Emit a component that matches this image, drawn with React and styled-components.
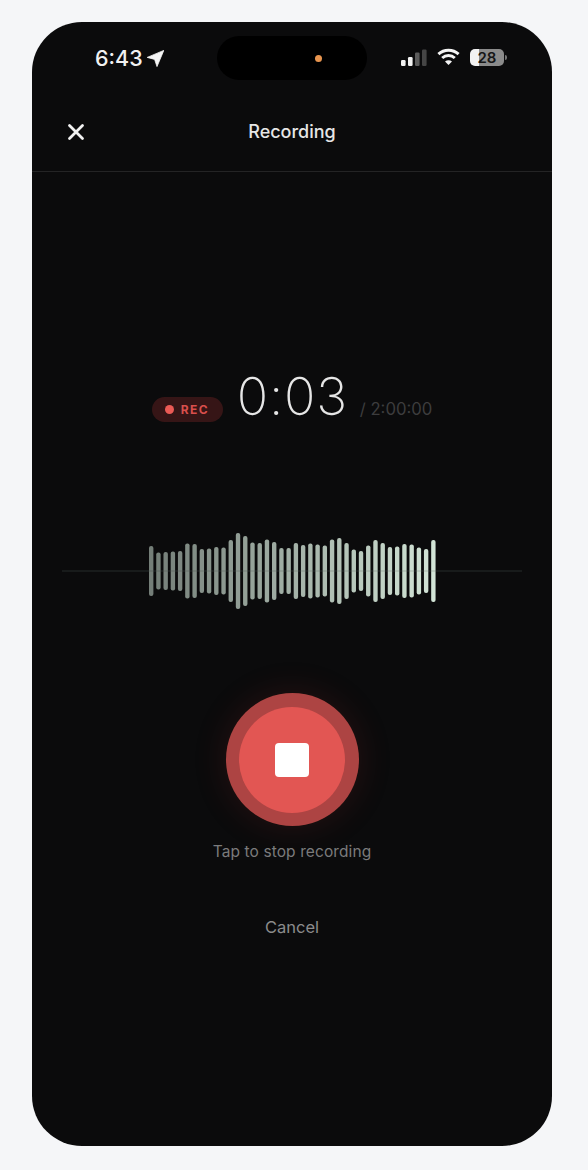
import React from 'react'
import styled, { createGlobalStyle } from 'styled-components'

const GlobalStyle = createGlobalStyle`
  html, body {
    margin: 0;
    padding: 0;
    background: #f5f6f8;
    font-family: Inter, "Liberation Sans", sans-serif;
  }
`

const Page = styled.div`
  width: 588px;
  height: 1170px;
  padding: 22px 36px 24px 32px;
  box-sizing: border-box;
`

const Phone = styled.div`
  width: 520px;
  height: 1124px;
  background: #0b0b0c;
  border-radius: 50px;
  overflow: hidden;
`

const StatusBar = styled.div`
  display: grid;
  grid-template-columns: 1fr 150px 1fr;
  padding-top: 14px;
  height: 44px;
`

const Clock = styled.div`
  display: flex;
  align-items: center;
  gap: 4px;
  padding-left: 63px;
  color: #f1f1f1;
  font-size: 21.5px;
  font-weight: 500;
`

const Island = styled.div`
  display: flex;
  align-items: center;
  justify-content: center;
  background: #000;
  border-radius: 22px;
  padding-left: 52px;
`

const CameraDot = styled.span`
  width: 7px;
  height: 7px;
  border-radius: 50%;
  background: #e8954f;
`

const StatusIcons = styled.div`
  display: flex;
  align-items: center;
  gap: 10px;
  padding-left: 34px;
  margin-top: -2px;
`

const Battery = styled.div`
  width: 34px;
  height: 17px;
  border-radius: 5px;
  background: linear-gradient(90deg, #f2f2f2 26%, #8b8b8b 26%);
  color: #161616;
  font-size: 15px;
  font-weight: 600;
  line-height: 17px;
  text-align: center;
  position: relative;

  &::after {
    content: '';
    position: absolute;
    right: -3px;
    top: 6px;
    width: 2px;
    height: 5px;
    border-radius: 0 2px 2px 0;
    background: #777;
  }
`

const Header = styled.div`
  display: grid;
  grid-template-columns: 1fr auto 1fr;
  align-items: center;
  height: 92px;
  padding-top: 12px;
  box-sizing: border-box;
  border-bottom: 1px solid #242425;
`

const CloseButton = styled.div`
  display: flex;
  padding-left: 34px;
`

const Title = styled.div`
  color: #e6e6e6;
  font-size: 18px;
  font-weight: 500;
`

const TimerRow = styled.div`
  display: flex;
  justify-content: center;
  align-items: flex-end;
  margin-top: 197px;
  height: 58px;
`

const RecBadge = styled.div`
  display: flex;
  align-items: center;
  gap: 7px;
  width: 71px;
  height: 25px;
  box-sizing: border-box;
  padding-left: 13px;
  margin-bottom: 5px;
  border-radius: 13px;
  background: #361516;
  color: #d94f4c;
  font-size: 12px;
  font-weight: 700;
  letter-spacing: 1.5px;

  &::before {
    content: '';
    width: 9px;
    height: 9px;
    border-radius: 50%;
    background: #ea5a55;
  }
`

const Elapsed = styled.div`
  margin-left: 14px;
  color: #e6e6e6;
  font-size: 52px;
  font-weight: 200;
  letter-spacing: 0.8px;
  line-height: 58px;
  width: 108px;
  margin-bottom: 1px;
  white-space: nowrap;
`

const Limit = styled.div`
  margin-left: 15px;
  margin-bottom: 6px;
  color: #3d3d3e;
  font-size: 16.7px;
  line-height: 24px;
  white-space: nowrap;
`

const Wave = styled.svg`
  display: block;
  margin: 104px 0 0 30px;
`

const Controls = styled.div`
  display: flex;
  flex-direction: column;
  align-items: center;
  margin-top: 82px;
`

const StopRing = styled.div`
  display: flex;
  align-items: center;
  justify-content: center;
  width: 133px;
  height: 133px;
  border-radius: 50%;
  background: #ad4443;
  box-shadow: 0 0 30px 4px rgba(140, 40, 38, 0.16);
`

const StopCore = styled.div`
  display: flex;
  align-items: center;
  justify-content: center;
  width: 106px;
  height: 106px;
  border-radius: 50%;
  background: #e25653;
`

const StopSquare = styled.div`
  width: 34px;
  height: 34px;
  border-radius: 4px;
  background: #fff;
`

const Hint = styled.div`
  margin-top: 16px;
  color: #7b7b7c;
  font-size: 15.5px;
  letter-spacing: 0.1px;
  line-height: 20px;
`

const CancelLink = styled.div`
  margin-top: 54px;
  color: #8b8b8c;
  font-size: 16.5px;
  line-height: 22px;
`

const barHeights = [
  50, 37, 38, 39, 40, 55, 54, 44, 45, 48, 47, 62, 76, 70, 57, 56, 63, 58, 46, 46,
  56, 52, 55, 53, 51, 63, 66, 56, 43, 40, 51, 62, 56, 48, 49, 54, 53, 47, 44, 62,
]

// grey-green on the left, getting lighter towards the right
const barColor = (i) => {
  const t = i / (barHeights.length - 1)
  const mix = (a, b) => Math.round(a + (b - a) * t)
  return `rgb(${mix(116, 210)}, ${mix(126, 228)}, ${mix(120, 214)})`
}

const Waveform = () => (
  <Wave width="460" height="80" viewBox="0 0 460 80">
    <line x1="0" y1="40" x2="460" y2="40" stroke="#2b312e" strokeWidth="1" />
    {barHeights.map((h, i) => (
      <rect
        key={i}
        x={87 + i * 7.235}
        y={40 - h / 2}
        width="4.4"
        height={h}
        rx="2"
        fill={barColor(i)}
      />
    ))}
    <line x1="0" y1="40" x2="460" y2="40" stroke="#0b0b0c" strokeOpacity="0.18" strokeWidth="1" />
  </Wave>
)

export default function App() {
  return (
    <Page>
      <GlobalStyle />
      <Phone>
        <StatusBar>
          <Clock>
            6:43
            <svg width="17" height="17" viewBox="0 0 17 17">
              <path d="M16.8 .4 L10 16.6 L7.6 9.4 L.2 7.4 Z" fill="#f6f6f6" stroke="#f6f6f6" strokeWidth="0.8" strokeLinejoin="round" />
            </svg>
          </Clock>
          <Island>
            <CameraDot />
          </Island>
          <StatusIcons>
            <svg width="26" height="17" viewBox="0 0 26 17">
              <rect x="0" y="11" width="4.6" height="6" rx="1.2" fill="#f2f2f2" />
              <rect x="7" y="8" width="4.6" height="9" rx="1.2" fill="#f2f2f2" />
              <rect x="14" y="3.5" width="4.6" height="13.5" rx="1.2" fill="#5c5c5c" />
              <rect x="21" y="0.5" width="4.6" height="16.5" rx="1.2" fill="#454545" />
            </svg>
            <svg width="23" height="18" viewBox="0 0 23 18" fill="none" stroke="#f4f4f4" strokeWidth="3">
              <path d="M1.4 6.2 C7 1 16 1 21.6 6.2" />
              <path d="M5.2 10 C8.8 6.7 14.2 6.7 17.8 10" />
              <path d="M11.5 17 L8 13.4 C10 11.8 13 11.8 15 13.4 Z" fill="#f4f4f4" stroke="none" />
            </svg>
            <Battery>28</Battery>
          </StatusIcons>
        </StatusBar>
        <Header>
          <CloseButton>
            <svg width="20" height="20" viewBox="0 0 20 20" stroke="#f2f2f2" strokeWidth="2.8" strokeLinecap="round">
              <path d="M3.5 3.5 L16.5 16.5 M16.5 3.5 L3.5 16.5" />
            </svg>
          </CloseButton>
          <Title>Recording</Title>
        </Header>
        <TimerRow>
          <RecBadge>REC</RecBadge>
          <Elapsed>0:03</Elapsed>
          <Limit>/ 2:00:00</Limit>
        </TimerRow>
        <Waveform />
        <Controls>
          <StopRing>
            <StopCore>
              <StopSquare />
            </StopCore>
          </StopRing>
          <Hint>Tap to stop recording</Hint>
          <CancelLink>Cancel</CancelLink>
        </Controls>
      </Phone>
    </Page>
  )
}
